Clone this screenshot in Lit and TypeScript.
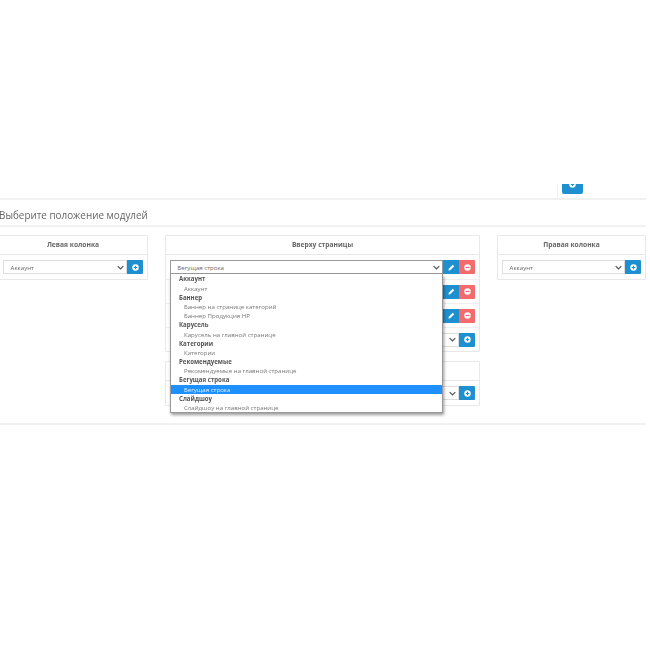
import { LitElement, html, css, svg } from "lit";
import { customElement } from "lit/decorators.js";

const plus = svg`<svg class="ic" viewBox="0 0 10 10" width="7" height="7"><circle cx="5" cy="5" r="4.6" fill="#fff"/><rect x="2.6" y="4.2" width="4.8" height="1.6" fill="#1f90cf"/><rect x="4.2" y="2.6" width="1.6" height="4.8" fill="#1f90cf"/></svg>`;
const minus = svg`<svg class="ic" viewBox="0 0 10 10" width="7" height="7"><circle cx="5" cy="5" r="4.6" fill="#fff"/><rect x="2.2" y="4.1" width="5.6" height="1.8" fill="#f56b6b"/></svg>`;
const pencil = svg`<svg class="ic" viewBox="0 0 10 10" width="7" height="7"><path d="M0.6 9.4 1.2 6.8 6.8 1.2 8.8 3.2 3.2 8.8Z" fill="#fff"/></svg>`;
const chev = svg`<svg class="chev" viewBox="0 0 10 7" width="7" height="5"><path d="M1 1.5 5 5.5 9 1.5" fill="none" stroke="#555" stroke-width="1.8"/></svg>`;

const groups: [string, string[]][] = [
  ["Аккаунт", ["Аккаунт"]],
  ["Баннер", ["Баннер на странице категорий", "Баннер Продукция HP"]],
  ["Карусель", ["Карусель на главной странице"]],
  ["Категории", ["Категории"]],
  ["Рекомендуемые", ["Рекомендуемые на главной странице"]],
  ["Бегущая строка", ["Бегущая строка"]],
  ["Слайдшоу", ["Слайдшоу на главной странице"]],
];

@customElement("app-root")
export class AppRoot extends LitElement {
  static styles = css`
    :host { display: block; width: 650px; height: 650px; overflow: hidden; background: #fff; font-family: "Open Sans", sans-serif; color: #666; }
    .page { filter: blur(0.3px); height: 650px; }
    .top { height: 200px; box-sizing: border-box; border-bottom: 2px solid #f1f1f1; width: 646px; padding-top: 184px; }
    .topcell { margin-left: 557px; height: 14px; box-sizing: border-box; border-left: 1px solid #eee; padding-left: 4px; }
    .topbtn { width: 21px; height: 10px; background: #1f90cf; border-radius: 0 0 2px 2px; overflow: hidden; display: flex; justify-content: center; }
    .topbtn .ic { margin-top: -3.5px; }
    h2 { margin: 0 0 0 -1px; width: 647px; box-sizing: border-box; font-weight: 400; font-size: 9.9px; line-height: 14px; height: 27px; padding-top: 8px; border-bottom: 2px solid #f1f1f1; color: #666; white-space: nowrap; }
    .grid { display: grid; grid-template-columns: 150px 315px 149px; column-gap: 17px; margin: 8px 0 0 -2px; align-items: start; }
    .col { display: flex; flex-direction: column; gap: 9px; }
    .panel { border: 1px solid #e8e8e8; border-radius: 1px; }
    .head { height: 18px; border-bottom: 1px solid #e8e8e8; font-size: 6.7px; font-weight: 700; text-align: center; line-height: 18px; color: #666; }
    .row { display: flex; align-items: center; box-sizing: border-box; padding: 0 4px; height: 24px; }
    .row + .row { border-top: 1px solid #eee; }
    .sel { flex: 1; min-width: 0; height: 14px; box-sizing: border-box; border: 1px solid #ddd; display: flex; align-items: center; justify-content: space-between; padding: 0 2px 0 6.6px; font-size: 6.1px; color: #666; background: #fff; }
    .sel.open { border-color: #999; position: relative; }
    .btn { width: 16px; height: 14px; flex: none; display: flex; align-items: center; justify-content: center; background: #1f90cf; }
    .btn.plus { border-radius: 0 1px 1px 0; }
    .btn.red { background: #f56b6b; border-radius: 0 1px 1px 0; }
    .ic { display: block; }
    .chev { display: block; flex: none; margin-left: auto; }
    .wrap { position: relative; flex: 1; min-width: 0; display: flex; }
    .menu { position: absolute; left: 0; right: 0; top: 14px; height: 139px; box-sizing: border-box; border: 1px solid #999; border-top: 0; background: #fff; box-shadow: 1px 2px 3px rgba(0,0,0,.4); z-index: 2; padding-top: 0.4px; overflow: hidden; font-size: 6.1px; }
    .g, .i { height: 9.2px; line-height: 9.2px; white-space: nowrap; }
    .g { font-weight: 700; padding-left: 8px; color: #555; font-size: 6.1px; line-height: 10.8px; }
    .i { padding-left: 13px; color: #777; }
    .i.on { background: #1e90ff; color: #e4f1ff; }
    .foot { margin-top: 17px; border-top: 2px solid #f1f1f1; width: 646px; }
  `;

  private addRow(label: string) {
    return html`<div class="row"><div class="sel"><span>${label}</span>${chev}</div><div class="btn plus">${plus}</div></div>`;
  }
  private editRow() {
    return html`<div class="row"><div class="sel">${chev}</div><div class="btn">${pencil}</div><div class="btn red">${minus}</div></div>`;
  }

  render() {
    return html`
      <div class="page">
        <div class="top"><div class="topcell"><div class="topbtn">${plus}</div></div></div>
        <h2>Выберите положение модулей</h2>
        <div class="grid">
          <div class="col"><div class="panel"><div class="head">Левая колонка</div>${this.addRow("Аккаунт")}</div></div>
          <div class="col">
            <div class="panel">
              <div class="head">Вверху страницы</div>
              <div class="row">
                <div class="wrap">
                  <div class="sel open"><span>Бегущая строка</span>${chev}</div>
                  <div class="menu">
                    ${groups.map(([g, items]) => html`<div class="g">${g}</div>${items.map((t) => html`<div class="i ${g === "Бегущая строка" ? "on" : ""}">${t}</div>`)}`)}
                  </div>
                </div>
                <div class="btn">${pencil}</div><div class="btn red">${minus}</div>
              </div>
              ${this.editRow()}
              ${this.editRow()}
              ${this.addRow("")}
            </div>
            <div class="panel">
              <div class="head"></div>
              ${this.addRow("")}
            </div>
          </div>
          <div class="col"><div class="panel"><div class="head">Правая колонка</div>${this.addRow("Аккаунт")}</div></div>
        </div>
        <div class="foot"></div>
      </div>
    `;
  }
}
